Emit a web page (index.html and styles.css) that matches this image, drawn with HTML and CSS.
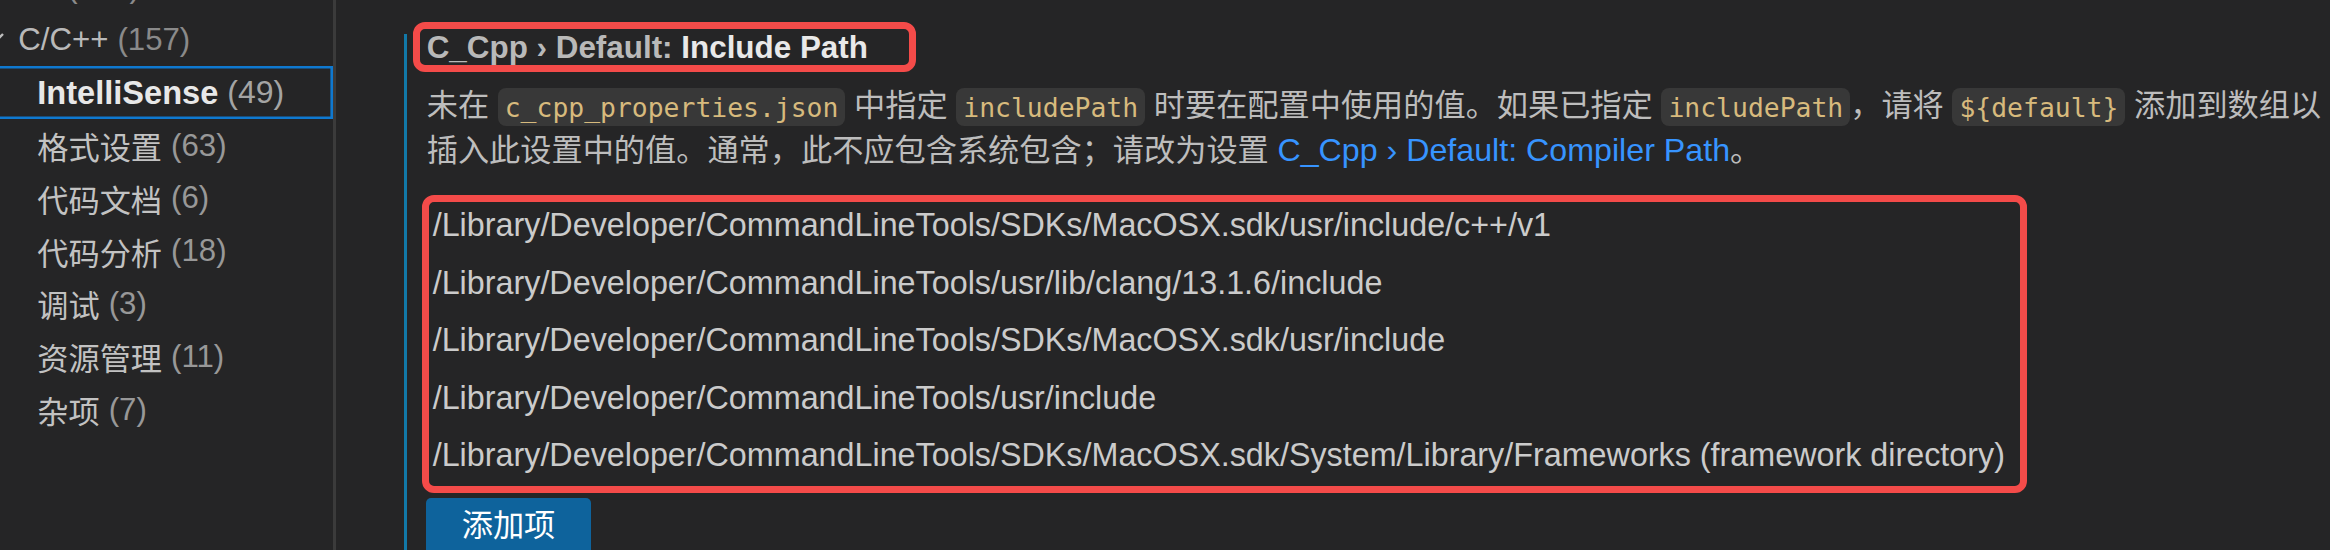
FILE: index.html
```html
<!DOCTYPE html>
<html lang="zh-CN">
<head>
<meta charset="utf-8">
<title>Settings - C_Cpp Default Include Path</title>
<link rel="stylesheet" href="styles.css">
</head>
<body>
<div class="app">
  <nav class="toc">
    <ul class="toc-list">
      <li class="toc-row cat"><span class="name">Git</span> <span class="count">(138)</span></li>
      <li class="toc-row cat"><svg class="chev" viewBox="0 0 18 18" aria-hidden="true"><path d="M-1 3 L6 10 L13 3" /></svg><span class="name">C/C++</span> <span class="count">(157)</span></li>
      <li class="toc-row sub selected"><span class="name">IntelliSense</span> <span class="count">(49)</span></li>
      <li class="toc-row sub"><span class="name">格式设置</span> <span class="count">(63)</span></li>
      <li class="toc-row sub"><span class="name">代码文档</span> <span class="count">(6)</span></li>
      <li class="toc-row sub"><span class="name">代码分析</span> <span class="count">(18)</span></li>
      <li class="toc-row sub"><span class="name">调试</span> <span class="count">(3)</span></li>
      <li class="toc-row sub"><span class="name">资源管理</span> <span class="count">(11)</span></li>
      <li class="toc-row sub"><span class="name">杂项</span> <span class="count">(7)</span></li>
    </ul>
  </nav>
  <main class="main">
    <section class="setting">
      <div class="title-box"><span class="title-cat">C_Cpp › Default: </span><span class="title-label">Include Path</span></div>
      <p class="desc">未在 <code class="code">c_cpp_properties.json</code> 中指定 <code class="code">includePath</code> 时要在配置中使用的值。如果已指定 <code class="code">includePath</code>，请将 <code class="code">${default}</code> 添加到数组以插入此设置中的值。通常，此不应包含系统包含；请改为设置 <a class="link" href="#">C_Cpp › Default: Compiler Path</a>。</p>
      <div class="list-box">
        <ul class="path-list">
          <li class="path-item">/Library/Developer/CommandLineTools/SDKs/MacOSX.sdk/usr/include/c++/v1</li>
          <li class="path-item">/Library/Developer/CommandLineTools/usr/lib/clang/13.1.6/include</li>
          <li class="path-item">/Library/Developer/CommandLineTools/SDKs/MacOSX.sdk/usr/include</li>
          <li class="path-item">/Library/Developer/CommandLineTools/usr/include</li>
          <li class="path-item">/Library/Developer/CommandLineTools/SDKs/MacOSX.sdk/System/Library/Frameworks (framework directory)</li>
        </ul>
      </div>
      <button class="btn" type="button">添加项</button>
    </section>
  </main>
</div>
</body>
</html>
```

FILE: styles.css
```css
html, body {
  margin: 0;
  padding: 0;
}

body {
  width: 2330px;
  height: 550px;
  overflow: hidden;
  background: #252526;
  font-family: "Liberation Sans", "Noto Sans CJK SC", sans-serif;
  font-size: 31.2px;
  color: #cccccc;
}

.app {
  display: flex;
  height: 550px;
}

/* ---------- table of contents ---------- */
.toc {
  width: 333px;
  flex: 0 0 333px;
  border-right: 3px solid #3b3b3b;
  overflow: hidden;
}

.toc-list {
  list-style: none;
  margin: -39.2px 0 0 -10px;
  padding: 0;
}

.toc-row {
  display: flex;
  align-items: center;
  height: 52.8px;
  white-space: nowrap;
  box-sizing: border-box;
}

.toc-row .name {
  color: #c2c2c2;
}

.toc-row .count {
  color: #989898;
  margin-left: 9px;
}

.cat {
  padding-left: 28.3px;
}

.cat .name {
  color: #b9b9b9;
}

.cat .count {
  color: #8a8a8a;
}

.sub {
  padding-left: 47.3px;
}

.selected {
  box-shadow: inset 0 0 0 2.6px #0f79d0;
}

.selected .name {
  font-weight: bold;
  font-size: 32.6px;
  color: #e8e8e8;
}

.selected .count {
  font-size: 32px;
  color: #a4a4a4;
}

.chev {
  width: 18px;
  height: 18px;
  margin-left: -28.3px;
  margin-right: 10.3px;
  overflow: visible;
}

.chev path {
  fill: none;
  stroke: #bdbdbd;
  stroke-width: 2.4;
}

/* ---------- main settings area ---------- */
.main {
  flex: 1;
  padding-left: 68px;
  min-width: 0;
}

.setting {
  display: flow-root;
  margin-top: 34px;
  height: 516px;
  border-left: 3.3px solid #1279a8;
  padding-left: 5.7px;
}

.title-box {
  margin-top: -12px;
  width: 503px;
  height: 50px;
  box-sizing: border-box;
  border: 7px solid #f44b49;
  border-radius: 12px;
  padding: 2px 7px 0;
  line-height: 34px;
  font-weight: bold;
  font-size: 31.4px;
  white-space: nowrap;
}

.title-cat {
  color: #b9b9b9;
}

.title-label {
  color: #e9e9e9;
}

.desc {
  margin: 12.4px 0 0;
  padding-left: 14px;
  line-height: 43.2px;
  color: #bdbdbd;
}

.code {
  font-family: "DejaVu Sans Mono", monospace;
  font-size: 26.4px;
  color: #d7ba7d;
  background: #383838;
  border-radius: 8px;
  padding: 3.6px 7px;
}

.link {
  color: #3794ff;
  text-decoration: none;
  font-size: 32.2px;
}

.list-box {
  margin: 23.2px 0 0 9px;
  width: 1605px;
  box-sizing: border-box;
  border: 7px solid #f44b49;
  border-radius: 12px;
}

.path-list {
  list-style: none;
  margin: -5px 0 1px;
  padding: 0 0 0 4px;
}

.path-item {
  height: 57.6px;
  line-height: 57.6px;
  font-size: 32.3px;
  color: #cbcbcb;
  white-space: nowrap;
}

.btn {
  display: block;
  margin: 5px 0 0 13px;
  padding: 6.5px 36px;
  border: none;
  border-radius: 5px;
  background: #0e639c;
  color: #ffffff;
  font-family: "Liberation Sans", "Noto Sans CJK SC", sans-serif;
  font-size: 31.2px;
  line-height: 43px;
}
```
